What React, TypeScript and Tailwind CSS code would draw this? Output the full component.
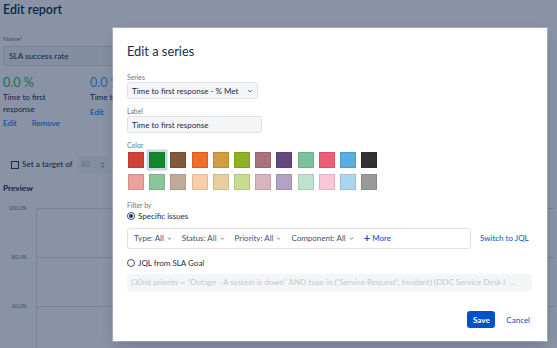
import React from "react";

const ROW1 = [
  "#d04437",
  "#14892c",
  "#815b3a",
  "#f06d26",
  "#d39c3f",
  "#8eb021",
  "#ac707a",
  "#654982",
  "#79c39c",
  "#f15c75",
  "#59afe1",
  "#333333"
];

const ROW2 = [
  "#e8a19b",
  "#8cc598",
  "#c0ab9a",
  "#f9cfaa",
  "#eacd9e",
  "#c9da91",
  "#d7b5bb",
  "#b2a2c4",
  "#bfe1d0",
  "#fbc6d8",
  "#acd5ef",
  "#999999"
];

const FILTERS = ["Type: All", "Status: All", "Priority: All", "Component: All"];

function Chevron({ className = "" }: { className?: string }) {
  return (
    <svg viewBox="0 0 8 5" className={className} fill="none" stroke="currentColor" strokeWidth="1.1">
      <path d="M1.2 1.2 4 3.8l2.8-2.6" />
    </svg>
  );
}

function Radio({ checked }: { checked?: boolean }) {
  return (
    <span className="flex h-[8px] w-[8px] items-center justify-center rounded-full border border-[#42526e] bg-white">
      {checked && <span className="h-[4px] w-[4px] rounded-full bg-[#253858]" />}
    </span>
  );
}

function Swatch({ color, selected }: { color: string; selected?: boolean }) {
  return (
    <span
      className={
        selected
          ? "h-[16px] w-[16px] border border-black/10 ring-[2.5px] ring-[#c9d7ee]"
          : "h-[16px] w-[16px] border border-black/10"
      }
      style={{ backgroundColor: color }}
    />
  );
}

function Page() {
  return (
    <div className="flex flex-col px-[3px]">
      <h1 className="text-[12.5px] font-semibold leading-[20px] text-[#172b4d]">Edit report</h1>

      <div className="mt-[14px] text-[6.5px] leading-[10px] text-[#6b778c]">
        Name<span className="text-[#de350b]">*</span>
      </div>
      <div className="mt-[2px] flex h-[20px] w-[330px] items-center rounded-[3px] border border-[#dfe1e6] bg-[#f4f5f7] px-[5px] text-[8.2px]">
        SLA success rate
      </div>

      <div className="mt-[8px] flex">
        <div className="flex w-[87px] flex-col">
          <span className="text-[12.6px] leading-[18px] text-[#3bb55f]">0.0 %</span>
          <span className="text-[8px] leading-[11.5px]">
            Time to first
            <br />
            response
          </span>
          <div className="mt-[2px] flex gap-[15px] text-[8px] leading-[12px] text-[#0065ff]">
            <span>Edit</span>
            <span>Remove</span>
          </div>
        </div>
        {/* second stat is cut off by the dialog */}
        <div className="flex w-[23px] flex-col overflow-hidden whitespace-nowrap">
          <span className="text-[12.6px] leading-[18px] text-[#4aa3f0]">0.0 %</span>
          <span className="text-[8px] leading-[11.5px]">Time to resolution</span>
          <span className="mt-[2px] text-[8px] leading-[12px] text-[#0065ff]">Edit</span>
        </div>
      </div>

      <div className="mt-[27px] flex items-center pl-[8px] text-[8.2px]">
        <span className="h-[8px] w-[8px] border border-[#253858] bg-white" />
        <span className="ml-[3px]">Set a target of</span>
        <span className="ml-[4px] flex h-[17px] w-[32px] items-center justify-between rounded-[3px] bg-[#f4f5f7] px-[4px] text-[#b3bac5]">
          80
          <span className="flex flex-col text-[#42526e]">
            <Chevron className="h-[3px] w-[5px] rotate-180" />
            <Chevron className="h-[3px] w-[5px]" />
          </span>
        </span>
        <span className="ml-[4px]">%</span>
      </div>

      <div className="mt-[8px] text-[8.3px] font-bold leading-[14px]">Preview</div>

      <div className="mt-[13px] flex flex-col">
        {["100.0%", "80.0%", "60.0%"].map((l) => (
          <div key={l} className="flex h-[49px]">
            <span className="relative -top-[4px] w-[24px] text-right text-[5.5px] leading-[8px] text-[#6b778c]">
              {l}
            </span>
            <div className="ml-[9px] flex-1 border-l border-t border-[#dfe1e6]" />
          </div>
        ))}
      </div>
    </div>
  );
}

export default function App() {
  return (
    <div className="relative h-[348px] w-[557px] overflow-hidden bg-white font-['Lato',sans-serif] text-[#172b4d]">
      <Page />

      <div className="absolute inset-0 bg-[rgba(9,30,66,0.48)]" />

      <div className="absolute left-[113px] top-[28px] flex h-[313px] w-[434px] flex-col bg-white px-[14px] pt-[13px] pb-[13px] shadow-[0_0_0_1px_rgba(255,255,255,0.25),0_6px_14px_-4px_rgba(9,30,66,0.3)]">
        <h2 className="text-[12.8px] leading-[20px]">Edit a series</h2>

        <label className="mt-[11px] text-[6.8px] leading-[10px] text-[#6b778c]">Series</label>
        <div className="flex h-[17px] w-[131px] items-center justify-between whitespace-nowrap rounded-[3px] border border-[#dfe1e6] bg-[#f4f5f7] px-[4px] text-[8px]">
          <span>Time to first response - % Met</span>
          <Chevron className="h-[4px] w-[6px] text-[#42526e]" />
        </div>

        <label className="mt-[7px] text-[6.8px] leading-[10px] text-[#6b778c]">Label</label>
        <div className="flex h-[17px] w-[135px] items-center whitespace-nowrap rounded-[3px] border border-[#dfe1e6] bg-[#f4f5f7] px-[4px] text-[8px]">
          Time to first response
        </div>

        <label className="mt-[7px] text-[6.8px] leading-[10px] text-[#4c7fc4]">Color</label>
        <div className="mt-[2px] flex flex-col gap-[5.5px] pl-[1px]">
          <div className="flex gap-[5.2px]">
            {ROW1.map((c, i) => (
              <Swatch key={c} color={c} selected={i === 1} />
            ))}
          </div>
          <div className="flex gap-[5.2px]">
            {ROW2.map((c) => (
              <Swatch key={c} color={c} />
            ))}
          </div>
        </div>

        <label className="mt-[10px] text-[6.8px] leading-[10px] text-[#6b778c]">Filter by</label>
        <div className="flex h-[12px] items-center gap-[3px] text-[8px]">
          <Radio checked />
          <span>Specific issues</span>
        </div>

        <div className="mt-[6px] flex items-center">
          <div className="flex h-[21px] w-[344px] items-center gap-[10px] whitespace-nowrap rounded-[3px] border border-[#dfe1e6] px-[6px] text-[8px] text-[#42526e]">
            {FILTERS.map((f) => (
              <span key={f} className="flex items-center gap-[3px]">
                {f}
                <Chevron className="h-[3px] w-[5px]" />
              </span>
            ))}
            <span className="flex items-center gap-[2px] text-[#0052cc]">
              <span className="text-[11px] font-bold leading-[12px]">+</span>
              More
            </span>
          </div>
          <span className="ml-[9px] whitespace-nowrap text-[8px] text-[#0052cc]">Switch to JQL</span>
        </div>

        <div className="mt-[8px] flex h-[12px] items-center gap-[3px] text-[8px]">
          <Radio />
          <span>JQL from SLA Goal</span>
        </div>
        <div className="mt-[5px] flex h-[17px] w-[405px] items-center overflow-hidden whitespace-nowrap rounded-[3px] bg-[#f4f5f7] px-[4px] text-[8px] text-[#c1c7d0]">
          (30m) priority = "Outage - A system is down" AND type in ("Service Request", Incident) (DDC Service Desk I&nbsp;&nbsp;...
        </div>

        <div className="mt-auto flex items-center justify-end gap-[11px] pr-[3px]">
          <button className="flex h-[17px] w-[28px] items-center justify-center rounded-[3px] bg-[#0052cc] text-[8px] font-bold text-white">
            Save
          </button>
          <span className="text-[8px] text-[#0052cc]">Cancel</span>
        </div>
      </div>
    </div>
  );
}
